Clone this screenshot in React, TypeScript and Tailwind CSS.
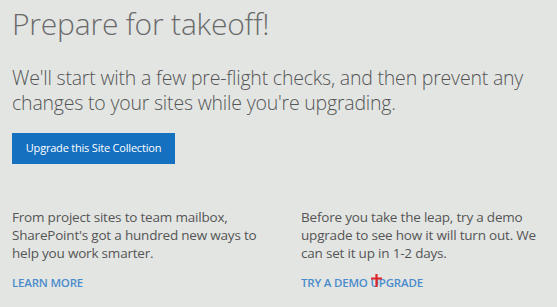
export default function App() {
  return (
    <div
      className="w-[557px] h-[307px] bg-[#e3e5e3] text-[#5a5a5a] overflow-hidden pl-[12px] pr-4 pt-[4px]"
      style={{ fontFamily: '"Open Sans", "Noto Sans", sans-serif' }}
    >
      <h1 className="text-[30px] font-light leading-[40px] text-[#6a6a6a] tracking-[-0.2px]">
        Prepare for takeoff!
      </h1>

      <p className="mt-[21px] text-[19.5px] leading-[25px] font-light text-[#555] tracking-[-0.2px]">
        We'll start with a few pre-flight checks, and then prevent any
        <br />
        changes to your sites while you're upgrading.
      </p>

      <button className="mt-[18px] h-[31px] w-[163px] bg-[#1570c0] text-white text-[11px] tracking-[-0.2px]">
        Upgrade this Site Collection
      </button>

      <div className="mt-[44px] grid grid-cols-[289px_1fr] text-[13.5px] leading-[18px] text-[#555] tracking-[-0.2px]">
        <div>
          <p>
            From project sites to team mailbox,
            <br />
            SharePoint's got a hundred new ways to
            <br />
            help you work smarter.
          </p>
          <a className="mt-[14px] block text-[11.5px] leading-[14px] font-semibold uppercase text-[#4a8ccb]">
            Learn more
          </a>
        </div>
        <div>
          <p>
            Before you take the leap, try a demo
            <br />
            upgrade to see how it will turn out. We
            <br />
            can set it up in 1-2 days.
          </p>
          <a className="relative mt-[14px] block text-[11.5px] leading-[14px] font-semibold uppercase text-[#4a8ccb]">
            Try a demo upgrade
            <svg
              className="absolute left-[70px] top-[-2px]"
              width="11"
              height="13"
              viewBox="0 0 11 13"
            >
              <path d="M5.5 0v13M0 4.5h11" stroke="#e0242a" strokeWidth="2.2" />
            </svg>
          </a>
        </div>
      </div>
    </div>
  );
}
